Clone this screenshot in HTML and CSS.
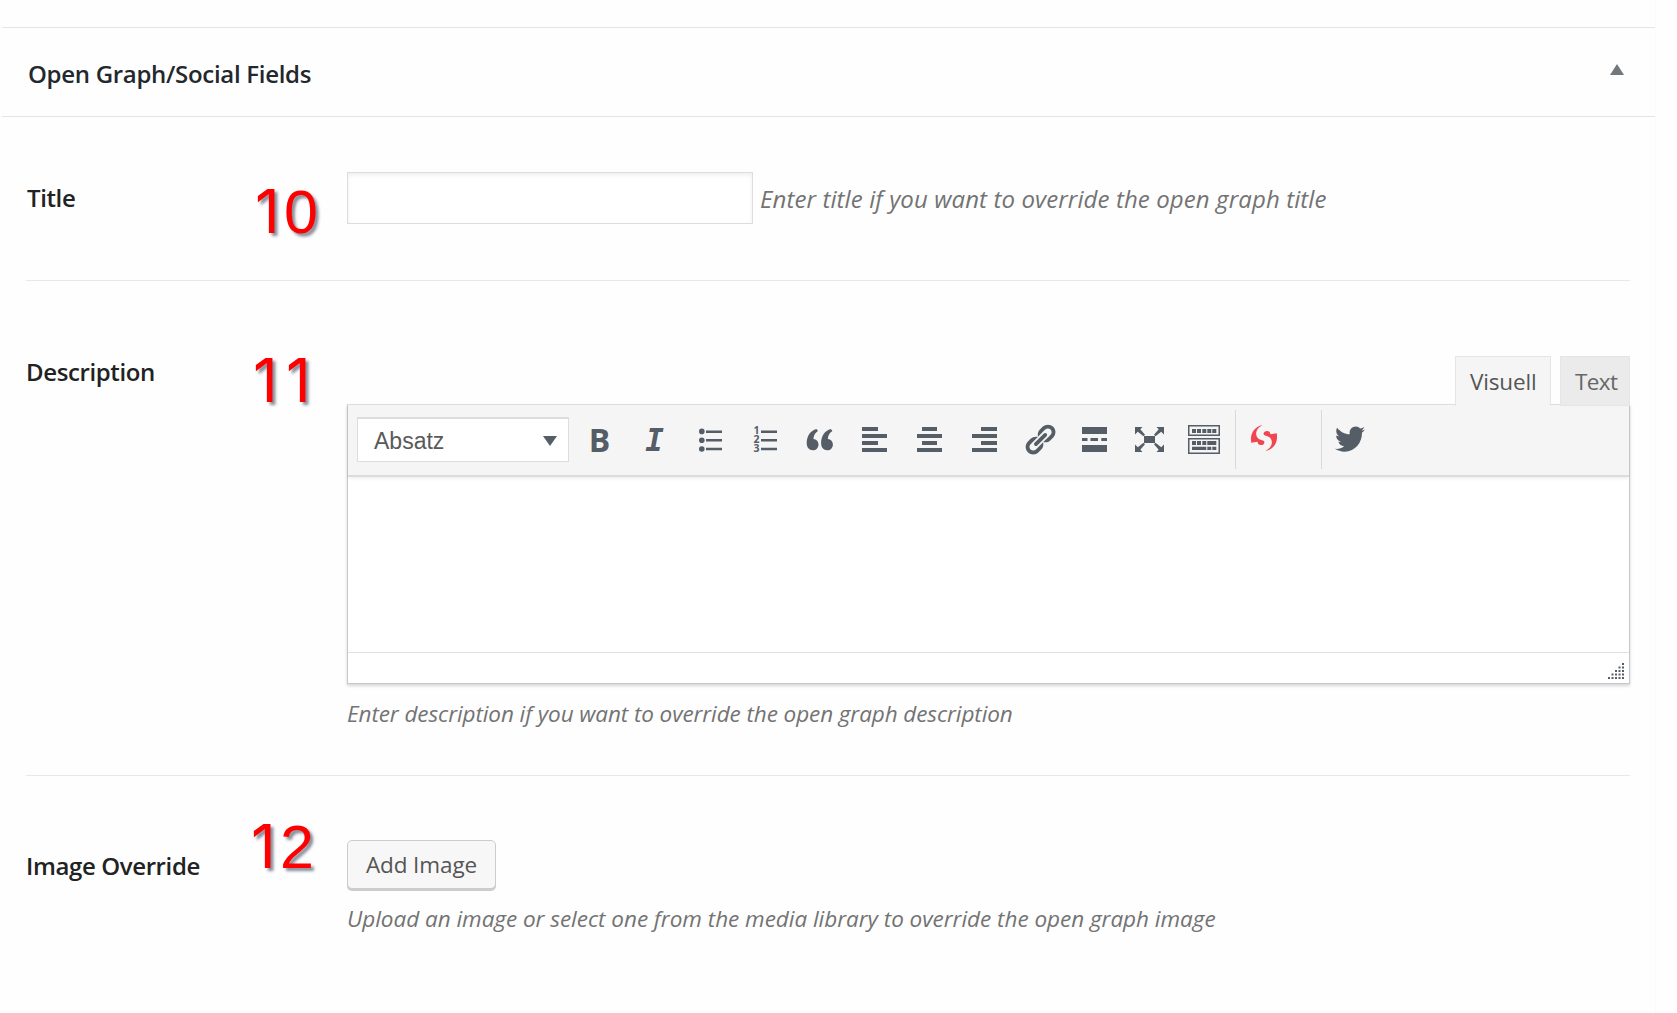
FILE: index.html
```html
<!DOCTYPE html>
<html lang="de">
<head>
<meta charset="utf-8">
<title>Open Graph/Social Fields</title>
<link rel="stylesheet" href="styles.css">
</head>
<body>
<section class="metabox">
  <header class="metabox-header">
    <h2 class="metabox-title">Open Graph/Social Fields</h2>
    <svg class="toggle" viewBox="0 0 14 11"><path d="M7 0L14 11H0z"/></svg>
  </header>

  <div class="field field-title">
    <label class="label" for="og-title">Title</label>
    <div class="control control-inline">
      <input class="input" id="og-title" type="text">
      <span class="hint hint-title">Enter title if you want to override the open graph title</span>
    </div>
    <span class="callout callout-10"><span class="one">1</span>0</span>
  </div>

  <div class="field field-description">
    <span class="label">Description</span>
    <div class="control">
      <div class="tabs">
        <button class="tab tab-active">Visuell</button>
        <button class="tab tab-text">Text</button>
      </div>
      <div class="editor">
        <div class="toolbar">
          <div class="select">Absatz<svg class="caret" viewBox="0 0 14 10"><path d="M0 0H14L7 10z"/></svg></div>
          <div class="tools">
            <span class="tool tool-bold">B</span>
            <span class="tool tool-italic">I</span>
            <span class="tool"><svg class="icon" viewBox="0 0 36 36"><circle cx="9.8" cy="9.4" r="2.8"/><circle cx="9.8" cy="18.2" r="2.8"/><circle cx="9.8" cy="27" r="2.8"/><path d="M14 8.5h16V11H14zM14 17h16v2.5H14zM14 25.7h16v2.5H14z"/></svg></span>
            <span class="tool"><svg class="icon" viewBox="0 0 36 36"><text class="digit" x="6.5" y="12">1</text><text class="digit" x="6.5" y="21">2</text><text class="digit" x="6.5" y="30">3</text><path d="M14 8.5h16V11H14zM14 17h16v2.5H14zM14 25.7h16v2.5H14z"/></svg></span>
            <span class="tool"><svg class="icon" viewBox="0 0 36 36"><path id="q" d="M14.5 7L16 9C13.2 11 11.6 13.3 11.4 16.9C14.4 17 16.5 19.5 16.5 22.4C16.5 25.7 14.1 28.3 10.9 28.3C7 28.3 4.7 25.5 4.7 20.8C4.7 14.5 8.3 8.5 14.5 7z"/><use href="#q" x="14.4"/></svg></span>
            <span class="tool"><svg class="icon" viewBox="0 0 36 36"><path d="M5 5h16v4H5zM5 12h25v4H5zM5 19h16v4H5zM5 26h25v4H5z"/></svg></span>
            <span class="tool"><svg class="icon" viewBox="0 0 36 36"><path d="M10 5h15v4H10zM5 12h25v4H5zM10 19h15v4H10zM5 26h25v4H5z"/></svg></span>
            <span class="tool"><svg class="icon" viewBox="0 0 36 36"><path d="M14 5h16v4H14zM5 12h25v4H5zM14 19h16v4H14zM5 26h25v4H5z"/></svg></span>
            <span class="tool"><svg class="icon" viewBox="0 0 36 36"><path transform="translate(.2 0) scale(1.75)" d="M17.74 2.76c1.68 1.69 1.68 4.41 0 6.1l-1.53 1.52c-1.12 1.12-2.7 1.47-4.14 1.09l2.62-2.61.76-.77.76-.76c.84-.84.84-2.2 0-3.04-.84-.85-2.2-.85-3.04 0l-.77.76-3.38 3.38c-.37-1.44-.02-3.02 1.1-4.14l1.52-1.53c1.69-1.68 4.42-1.68 6.1 0zM8.59 13.43l5.34-5.34c.42-.42.42-1.1 0-1.52-.44-.43-1.13-.39-1.53 0l-5.33 5.34c-.42.42-.42 1.1 0 1.52.44.43 1.13.39 1.52 0zm-.76 2.29l4.14-4.15c.38 1.44.03 3.02-1.09 4.14l-1.52 1.53c-1.69 1.68-4.41 1.68-6.1 0-1.68-1.68-1.68-4.42 0-6.1l1.53-1.52c1.12-1.12 2.7-1.47 4.14-1.1l-4.14 4.15c-.85.84-.85 2.2 0 3.05.84.84 2.2.84 3.04 0z"/></svg></span>
            <span class="tool"><svg class="icon" viewBox="0 0 36 36"><path d="M5 5h25v7H5zM5 16h5.5v3H5zM13.5 16H21v3h-7.5zM24.3 16H30v3h-5.7zM5 23h25v7H5z"/></svg></span>
            <span class="tool"><svg class="icon" viewBox="0 0 36 36"><path d="M12 14h11v7H12z"/><path id="fa" d="M3 5h7.5L8.3 7.3L13 12.8L11.5 14.3L5.8 9.7L3 12.5z"/><use href="#fa" transform="translate(35 0) scale(-1 1)"/><use href="#fa" transform="translate(0 35) scale(1 -1)"/><use href="#fa" transform="translate(35 35) scale(-1 -1)"/></svg></span>
            <span class="tool"><svg class="icon" viewBox="0 0 36 36"><path fill-rule="evenodd" d="M1 3h32v11H1zM2.5 4.5v8h29v-8zM1 16h32v16H1zM2.5 17.5v13h29v-13z"/><path d="M5 7h4v4H5zM10 7h4v4h-4zM15.3 7h4v4h-4zM20.3 7h4v4h-4zM25.3 7h4v4h-4zM5 19h4v4H5zM10 19h4v4h-4zM15.3 19h4v4h-4zM20.3 19h9v4h-9zM5 24.7h14.3V28H5zM20.3 24.7h4V28h-4zM25.3 24.7h4V28h-4z"/></svg></span>
          </div>
          <div class="tool-group"><svg class="icon icon-red" viewBox="0 0 36 36"><path id="s" d="M16.7 3C9 4.6 3.5 11 5.3 20.7L11.5 19.7C11.9 22 12.8 23 14.8 23C16.8 23 18.4 22 18.4 20.4C18.4 19 17.5 18.5 16 18.2C12 17.3 9.8 14.5 10.2 11C10.5 7.5 13.5 4.5 16.7 3z"/><use href="#s" transform="rotate(180 18 16)"/></svg></div>
          <div class="tool-group tool-group-last"><svg class="icon" viewBox="0 0 36 36"><path transform="translate(1.2 -.2) scale(1.68 1.73)" d="M18.94 4.46c-.49.73-1.11 1.38-1.83 1.9.01.15.01.31.01.47 0 4.85-3.69 10.44-10.43 10.44-2.07 0-4-.61-5.63-1.65.29.03.58.05.88.05 1.72 0 3.3-.59 4.55-1.57-1.6-.03-2.95-1.09-3.42-2.55.22.04.45.07.69.07.33 0 .66-.05.96-.13-1.67-.34-2.94-1.82-2.94-3.6v-.04c.5.27 1.06.44 1.66.46-.98-.66-1.63-1.78-1.63-3.06 0-.67.18-1.3.5-1.84 1.81 2.22 4.51 3.68 7.56 3.83-.06-.27-.1-.55-.1-.84 0-2.02 1.65-3.66 3.67-3.66 1.06 0 2.01.44 2.68 1.16.83-.17 1.62-.47 2.33-.89-.28.85-.86 1.57-1.62 2.02.75-.08 1.45-.28 2.11-.57z"/></svg></div>
        </div>
        <div class="canvas"></div>
        <div class="statusbar">
          <svg class="grip" viewBox="0 0 16 16"><path d="M14 0h2v2h-2zM10.5 3.5h2v2h-2zM14 3.5h2v2h-2zM7 7h2v2H7zM10.5 7h2v2h-2zM14 7h2v2h-2zM3.5 10.5h2v2h-2zM7 10.5h2v2H7zM10.5 10.5h2v2h-2zM14 10.5h2v2h-2zM0 14h2v2H0zM3.5 14h2v2h-2zM7 14h2v2H7zM10.5 14h2v2h-2zM14 14h2v2h-2z"/></svg>
        </div>
      </div>
      <p class="hint hint-description">Enter description if you want to override the open graph description</p>
    </div>
    <span class="callout callout-11"><span class="one">1</span><span class="one">1</span></span>
  </div>

  <div class="field field-image">
    <span class="label">Image Override</span>
    <div class="control">
      <button class="button">Add Image</button>
      <p class="hint hint-image">Upload an image or select one from the media library to override the open graph image</p>
    </div>
    <span class="callout callout-12"><span class="one">1</span>2</span>
  </div>
</section>
</body>
</html>
```
FILE: styles.css
```css
* { box-sizing: border-box; }

body {
  margin: 0;
  height: 1013px;
  overflow: hidden;
  background: #fefefe;
  color: #23282d;
  font-family: "Open Sans", "Noto Sans", sans-serif;
  font-size: 24px;
}

.metabox {
  width: 1656px;
  height: 1013px;
  padding: 27px 0 0 2px;
  border-right: 1px solid #fafafa;
}

.metabox-header {
  display: flex;
  justify-content: space-between;
  height: 90px;
  padding: 0 31px 0 26px;
  border-top: 1px solid #e5e5e5;
  border-bottom: 1px solid #e2e4e7;
}

.metabox-title {
  margin: 0;
  padding-top: 29px;
  font-size: 24px;
  font-weight: 600;
  line-height: 34px;
  letter-spacing: -.3px;
}

.toggle {
  width: 14px;
  height: 11px;
  margin-top: 36px;
  fill: #72777c;
}

.field {
  position: relative;
  display: flex;
  width: 1604px;
  margin-left: 24px;
}

.field-title { height: 164px; padding-top: 55px; border-bottom: 1px solid #e8e8e8; }
.field-description { height: 495px; padding-top: 75px; border-bottom: 1px solid #e8e8e8; }
.field-image { height: 237px; padding-top: 64px; }

.label {
  width: 321px;
  flex: none;
  color: #222;
  font-weight: 600;
  line-height: 34px;
  letter-spacing: -.38px;
}

.field-title .label { padding: 9px 0 0 1px; }
.field-description .label { margin-top: -1px; }
.field-image .label { padding-top: 9px; }

.control { flex: 1; }

.control-inline {
  display: flex;
  align-items: flex-start;
  gap: 7px;
}

.input {
  width: 406px;
  height: 52px;
  border: 1px solid #ddd;
  outline: 0;
  background: #fff;
  box-shadow: inset 0 2px 4px rgba(0, 0, 0, .07);
}

.hint {
  margin: 0;
  color: #737373;
  font-style: italic;
  font-size: 22.5px;
  line-height: 34px;
  white-space: nowrap;
}

.hint-title { padding-top: 10px; font-size: 24px; letter-spacing: .1px; }
.hint-description { padding-top: 13px; letter-spacing: -.09px; }
.hint-image { padding-top: 13px; letter-spacing: -.03px; }

.tabs {
  position: relative;
  display: flex;
  justify-content: flex-end;
  align-items: flex-start;
  gap: 9px;
  height: 48px;
}

.tab {
  width: 96px;
  height: 50px;
  padding: 0 0 0 14px;
  border: 1px solid #e5e5e5;
  background: #ebebeb;
  color: #666;
  font: 22.5px/48px "Open Sans", sans-serif;
  letter-spacing: -.15px;
  text-align: left;
}

.tab-text {
  width: 70px;
  padding-top: 1px;
  letter-spacing: -.6px;
}

.tab-active {
  border-bottom: 0;
  background: #f5f5f5;
  color: #555;
}

.editor {
  height: 280px;
  border: 1px solid #c8c8c8;
  border-top-color: #dedede;
  background: #fff;
  box-shadow: 0 2px 3px rgba(0, 0, 0, .16);
}

.toolbar {
  display: flex;
  align-items: center;
  height: 72px;
  padding-left: 9px;
  border-bottom: 2px solid #dcdcdc;
  background: #f5f5f5;
  box-shadow: 0 2px 3px rgba(0, 0, 0, .06);
}

.select {
  display: flex;
  justify-content: space-between;
  align-items: center;
  width: 212px;
  height: 45px;
  margin-bottom: 1px;
  padding: 1px 11px 0 16px;
  border: 1px solid #ddd;
  border-top-width: 2px;
  background: #fff;
  color: #595959;
  font: 23px/42px "Liberation Sans", Arial, sans-serif;
}

.caret { width: 14px; height: 10px; fill: #555d66; }

.tools { display: flex; margin-left: 3px; }

.tool {
  display: flex;
  justify-content: center;
  align-items: center;
  width: 55px;
  height: 36px;
  color: #555d66;
}

.tool-bold { font: bold 32px/36px "Open Sans", sans-serif; }
.tool-italic { font: italic bold 31px/36px "DejaVu Sans Mono", monospace; }

.icon { width: 36px; height: 36px; fill: #555d66; }
.icon-red { fill: #ef4650; }
.digit { font: bold 10.5px "Open Sans", sans-serif; }

.tool-group {
  display: flex;
  align-items: center;
  width: 86px;
  height: 59px;
  margin: 0 0 1px 3px;
  padding: 1px 0 0 10px;
  border-left: 1px solid #d9d9d9;
}

.tool-group-last { margin-left: 0; }

.canvas { height: 175px; }

.statusbar {
  display: flex;
  justify-content: flex-end;
  height: 31px;
  padding: 10px 5px 0 0;
  border-top: 1px solid #e2e2e2;
}

.grip { width: 16px; height: 16px; fill: #555d66; }

.button {
  display: block;
  width: 149px;
  height: 49px;
  padding: 0 0 0 18px;
  border: 1px solid #ccc;
  border-radius: 5px;
  background: #f7f7f7;
  box-shadow: 0 2px 0 #ccc;
  color: #555;
  font: 22.5px/47px "Open Sans", sans-serif;
  letter-spacing: -.12px;
  text-align: left;
}

.callout {
  position: absolute;
  color: #f00;
  font: 61px/70px "Liberation Sans", Arial, sans-serif;
  text-shadow: 3px 3px 3px rgba(70, 80, 100, .65);
}

.one { display: inline-block; width: 29px; font-family: Inter, sans-serif; }

.callout-10 { left: 229px; top: 59px; }
.callout-11 { left: 227px; top: 64px; }
.callout-12 { left: 225px; top: 35px; }
.callout-11 .one { width: 33px; }
```
